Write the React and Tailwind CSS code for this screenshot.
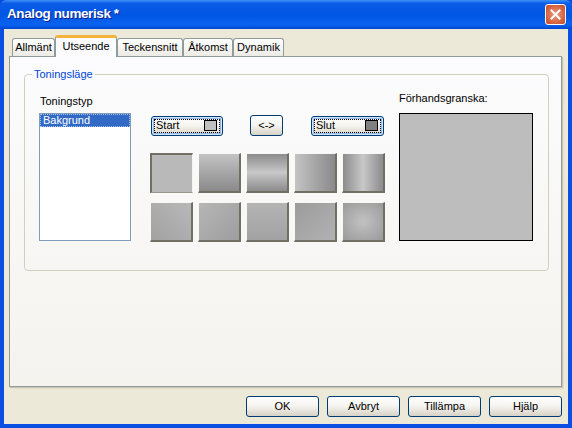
import React from "react";

const tabs = [
  { label: "Allmänt", w: "w-[43px]" },
  { label: "Utseende", w: "w-[62px]", active: true },
  { label: "Teckensnitt", w: "w-[66px]" },
  { label: "Åtkomst", w: "w-[50px]" },
  { label: "Dynamik", w: "w-[51px]" },
];

// gradient presets shown as tiles
const tiles = [
  "bg-[#b9b9b9]",
  "bg-linear-to-b from-[#c4c4c4] to-[#8a8a8a]",
  "bg-linear-to-b from-[#8c8c8c] via-[#c8c8c8] to-[#8c8c8c]",
  "bg-linear-to-r from-[#c4c4c4] to-[#8a8a8a]",
  "bg-linear-to-r from-[#8c8c8c] via-[#c8c8c8] to-[#8c8c8c]",
  "bg-linear-45 from-[#a2a2a2] to-[#b8b8b8]",
  "bg-linear-135 from-[#b6b6b6] to-[#9e9e9e]",
  "bg-linear-to-b from-[#b4b4b4] to-[#a2a2a2]",
  "bg-linear-to-br from-[#9c9c9c] to-[#b2b2b2]",
  "bg-radial from-[#c2c2c2] to-[#9a9a9a]",
];

function XpButton({ children, className = "" }) {
  return (
    <button
      className={
        "h-[21px] rounded-[3px] border border-[#003c74] bg-linear-to-b from-white via-[#f4f3ee] to-[#d8d2c6] text-[11px] text-black " +
        className
      }
    >
      {children}
    </button>
  );
}

function ColorButton({ label, swatch }) {
  return (
    <button className="flex h-[20px] w-full items-center rounded-[3px] border border-[#003c74] bg-linear-to-b from-white via-[#f4f3ee] to-[#d8d2c6] p-[2px] shadow-[inset_0_0_0_1px_#cee7ff,inset_0_0_0_2px_#98b8ea]">
      <span className="flex h-full flex-1 items-center justify-between border border-dotted border-black pl-[1px] pr-[2px]">
        <span className="text-[11px] leading-none text-black">{label}</span>
        <span className={"h-[11px] w-[13px] border border-black " + swatch} />
      </span>
    </button>
  );
}

export default function App() {
  return (
    <div className="flex h-[428px] w-[572px] flex-col overflow-hidden bg-[#0a48dd] font-['Liberation_Sans',Arial,sans-serif]">
      {/* Title bar */}
      <div className="flex h-[29px] shrink-0 items-center justify-between rounded-t-[6px] bg-[linear-gradient(to_bottom,#3d8ff7_0%,#0a5ce6_12%,#0055e3_50%,#0a63f0_85%,#0046d2_100%)] pl-[7px] pr-[6px]">
        <span className="text-[13.5px] font-bold tracking-[-0.4px] text-white [text-shadow:1px_1px_#0b1d8a]">
          Analog numerisk *
        </span>
        <button className="flex h-[21px] w-[21px] items-center justify-center rounded-[3px] border border-white bg-radial from-[#e99a7c] to-[#c8421c]">
          <svg width="11" height="11" viewBox="0 0 11 11">
            <path d="M1.5 1.5 L9.5 9.5 M9.5 1.5 L1.5 9.5" stroke="white" strokeWidth="2" strokeLinecap="square" />
          </svg>
        </button>
      </div>

      {/* Body */}
      <div className="flex flex-1 flex-col border-x-[4px] border-b-[4px] border-[#0a4fe2] bg-[#ece9d8] pt-[6px]">
        {/* Tabs */}
        <div className="ml-[8px] flex h-[21px] items-end">
          {tabs.map((t) =>
            t.active ? (
              <div
                key={t.label}
                className={
                  "relative z-10 -mb-px flex h-[22px] items-center justify-center rounded-t-[3px] border-x border-t-[3px] border-x-[#919b9c] border-t-[#f3b33d] bg-[#fcfcfe] pb-[2px] text-[11px] text-black " +
                  t.w
                }
              >
                {t.label}
              </div>
            ) : (
              <div
                key={t.label}
                className={
                  "flex h-[18px] items-center justify-center rounded-t-[3px] border-x border-t border-[#919b9c] bg-linear-to-b from-white to-[#ecebe5] text-[11px] text-black " +
                  t.w
                }
              >
                {t.label}
              </div>
            )
          )}
        </div>

        {/* Tab page */}
        <div className="ml-[5px] h-[331px] w-[553px] border border-[#919b9c] bg-linear-to-b from-[#fcfcfe] to-[#f4f3ee] pl-[14px] pt-[17px] shadow-[1px_1px_0_#c9c5b3,2px_2px_0_#e2dfcf]">
          {/* Group box */}
          <div className="relative h-[197px] w-[525px] rounded-[4px] border border-[#d0d0bf]">
            <span className="absolute left-[7px] top-[-8px] bg-[#fbfbfc] px-[2px] text-[11px] leading-[14px] text-[#0046d5]">
              Toningsläge
            </span>

            <div className="flex pl-[14px] pt-[16px]">
              {/* Toningstyp */}
              <div className="flex w-[92px] flex-col pt-[3px]">
                <span className="mb-[5px] pl-[1px] text-[11px] leading-[14px] text-black">Toningstyp</span>
                <div className="h-[128px] border border-[#7f9db9] bg-white">
                  <div className="h-[13px] border border-dotted border-[#a9c0ea] bg-[#316ac5] pl-[2px] text-[11px] leading-[11px] text-white">
                    Bakgrund
                  </div>
                </div>
              </div>

              {/* Start/Slut + tiles */}
              <div className="ml-[19px] flex flex-col pt-[24px]">
                <div className="flex items-center pl-[1px]">
                  <div className="w-[72px]">
                    <ColorButton label="Start" swatch="bg-[#c0c0c0]" />
                  </div>
                  <XpButton className="ml-[27px] h-[20px] w-[33px]">&lt;-&gt;</XpButton>
                  <div className="ml-[28px] w-[73px]">
                    <ColorButton label="Slut" swatch="bg-[#808080]" />
                  </div>
                </div>
                <div className="mt-[17px] grid grid-cols-[repeat(5,43px)] gap-x-[5px] gap-y-[9px]">
                  {tiles.map((c, i) => (
                    <div
                      key={i}
                      className={
                        "h-[40px] " +
                        (i === 0
                          ? "border-l-2 border-t-2 border-r border-b border-l-[#716f64] border-t-[#716f64] border-r-[#f4f3ee] border-b-[#9a988c] "
                          : "border-l border-t border-r-2 border-b-2 border-l-[#f8f8f4] border-t-[#f8f8f4] border-r-[#716f64] border-b-[#716f64] ") +
                        c
                      }
                    />
                  ))}
                </div>
              </div>

              {/* Preview */}
              <div className="ml-[14px] flex flex-col">
                <span className="mb-[8px] text-[11px] leading-[14px] text-black">Förhandsgranska:</span>
                <div className="h-[128px] w-[134px] border border-black bg-[#bdbdbd]" />
              </div>
            </div>
          </div>
        </div>

        {/* Dialog buttons */}
        <div className="mt-[9px] flex justify-end gap-[8px] pr-[6px]">
          <XpButton className="w-[73px]">OK</XpButton>
          <XpButton className="w-[73px]">Avbryt</XpButton>
          <XpButton className="w-[73px]">Tillämpa</XpButton>
          <XpButton className="w-[73px]">Hjälp</XpButton>
        </div>
      </div>
    </div>
  );
}
